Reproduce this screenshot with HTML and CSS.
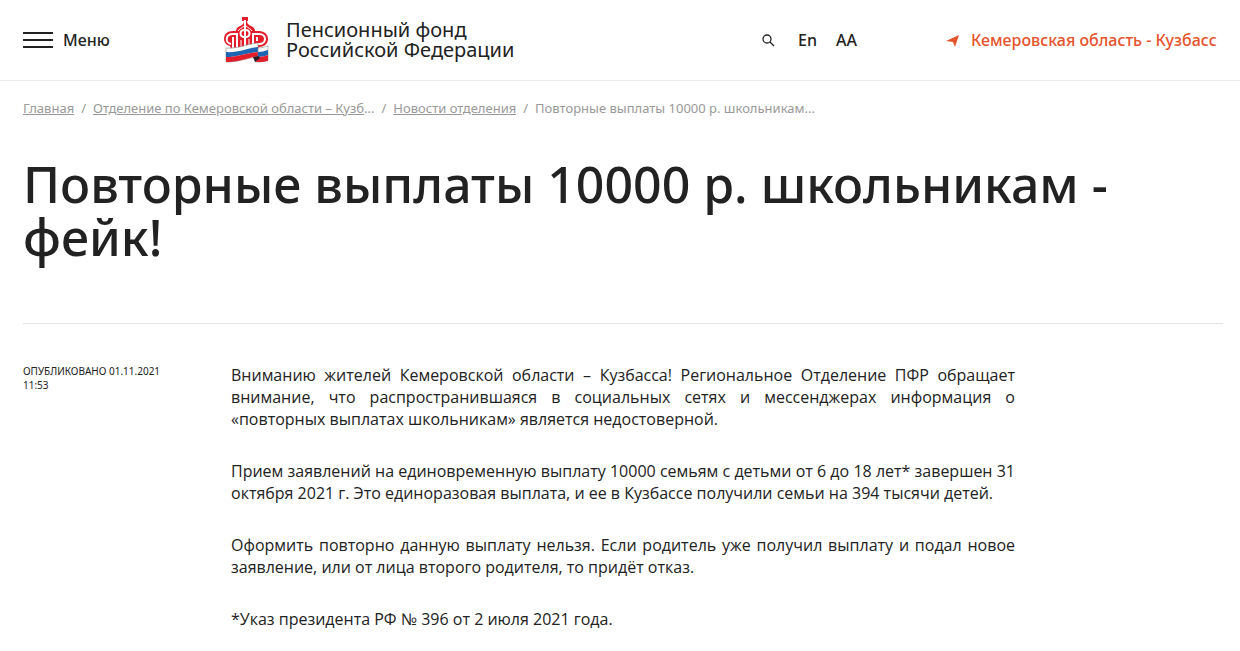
FILE: index.html
```html
<!DOCTYPE html>
<html lang="ru">
<head>
    <meta charset="UTF-8">
    <meta name="viewport" content="width=device-width, initial-scale=1.0">
    <title>Повторные выплаты 10000 р. школьникам - фейк!</title>
    <link rel="stylesheet" href="styles.css">
</head>
<body>
    <header class="header">
        <button type="button" class="menu-button">
            <span class="menu-icon"></span>
            Меню
        </button>

        <a href="#" class="logo">
            <svg class="logo-image" viewBox="0 0 46 48" aria-hidden="true">
                <!-- Crown -->
                <path fill="#e31e2b" d="M19 1h6v4h-1c0 3 2 4 4 5 3 1 4 3 4 5h4c6 0 9 4 9 8s-3 8-9 8l-1 2L8 33l-1-3c-4-1-6-4-6-7 0-5 3-8 9-8h3c0-2 1-4 4-5 2-1 4-2 4-5h-2z"/>
                <g fill="none" stroke="#fff" stroke-width="2">
                    <path d="M22 4v26"/>
                    <path d="M8 28c-6-1-6-10 2-10h5M10 32V21M14 32V18"/>
                    <path d="M30 30V18h6c8 0 8 10 0 10h-3M34 25v-4"/>
                    <path d="M22 14c-6-1-6 8 0 7 6 1 6-8 0-7z"/>
                    <path stroke-width="1" d="M18 32v-8M26 31v-8M15 15c1-2 4-3 6-5M29 15c-1-2-4-3-6-5"/>
                </g>
                <!-- Flag ribbon -->
                <path fill="#fff" stroke="#8a8a8a" stroke-width=".6" d="M3 32c12 1 21-4 32-5v14c-11 1-19 5-32 5z"/>
                <path fill="#1e65b4" d="M3 36c12 1 22-4 32-5v5c-11 1-20 5-32 5z"/>
                <path fill="#e31e2b" d="M3 41c12 0 21-4 32-5v4c-11 2-19 6-32 6z"/>
                <path fill="#fff" stroke="#8a8a8a" stroke-width=".6" d="M35 32c4 0 6-1 10-2v14c-5 2-9 2-13 2l3-4z"/>
                <path fill="#1e65b4" d="M35 36c4 0 6-1 10-2v5c-3 1-6 2-10 2z"/>
                <path fill="#e31e2b" d="M35 41c4 0 7-1 10-2v6c-4 1-8 1-12 1z"/>
                <path fill="#291b22" d="M30 41l5-1 2 2-5 4z"/>
            </svg>
            <span>Пенсионный фонд<br>Российской Федерации</span>
        </a>

        <div class="tools">
            <button type="button" class="search-button" aria-label="Поиск">
                <svg class="search-icon" viewBox="0 0 14 14" aria-hidden="true">
                    <circle cx="6" cy="6" r="4"/>
                    <path d="M9 9l4 4"/>
                </svg>
            </button>
            <a href="#">En</a>
            <a href="#">АА</a>
        </div>

        <a href="#" class="region">
            <svg class="region-icon" viewBox="0 0 14 14" aria-hidden="true">
                <path d="M13 2L9 14 7 9 0 8z"/>
            </svg>
            Кемеровская область - Кузбасс
        </a>
    </header>

    <main class="container">
        <nav class="breadcrumbs">
            <a href="#">Главная</a>
            <span>/</span>
            <span><a href="#">Отделение по Кемеровской области – Кузб</a>...</span>
            <span>/</span>
            <a href="#">Новости отделения</a>
            <span>/</span>
            <span>Повторные выплаты 10000 р. школьникам...</span>
        </nav>

        <h1>Повторные выплаты 10000 р. школьникам - фейк!</h1>

        <article class="news">
            <div class="news-date">Опубликовано 01.11.2021 11:53</div>
            <div class="news-text">
                <p>Вниманию жителей Кемеровской области – Кузбасса! Региональное Отделение ПФР обращает внимание, что распространившаяся в социальных сетях и мессенджерах информация о «повторных выплатах школьникам» является недостоверной.</p>
                <p>Прием заявлений на единовременную выплату 10000 семьям с детьми от 6 до 18 лет* завершен 31 октября 2021 г. Это единоразовая выплата, и ее в Кузбассе получили семьи на 394 тысячи детей.</p>
                <p>Оформить повторно данную выплату нельзя. Если родитель уже получил выплату и подал новое заявление, или от лица второго родителя, то придёт отказ.</p>
                <p>*Указ президента РФ № 396 от 2 июля 2021 года.</p>
            </div>
        </article>
    </main>
</body>
</html>
```
FILE: styles.css
```css
* {
    box-sizing: border-box;
}
body {
    margin: 0;
    background: #fff;
    color: #222;
    font-family: "Noto Sans", "Open Sans", sans-serif;
    font-size: 16px;
    line-height: 22px;
}
a {
    color: inherit;
    text-decoration: none;
}
button {
    padding: 0;
    border: none;
    background: none;
    color: inherit;
    font: inherit;
    cursor: pointer;
}
.header {
    display: grid;
    grid-template-columns: 200px 1fr 185px 276px;
    align-items: center;
    height: 81px;
    padding: 0 18px 0 23px;
    border-bottom: 1px solid #ebebeb;
    font-weight: 500;
}
.menu-button {
    display: flex;
    align-items: center;
    gap: 10px;
}
.menu-icon {
    width: 30px;
    height: 16px;
    border-top: 2px solid #222;
    border-bottom: 2px solid #222;
    background: linear-gradient(#222, #222) center / 100% 2px no-repeat;
}
.logo {
    display: flex;
    align-items: center;
    gap: 17px;
    font-size: 20px;
    font-weight: 400;
    line-height: 20px;
}
.logo-image {
    width: 46px;
    height: 48px;
}
.tools {
    display: flex;
    align-items: center;
    gap: 19px;
}
.search-button {
    display: flex;
    padding-right: 4px;
}
.search-icon {
    width: 14px;
    height: 14px;
    fill: none;
    stroke: #222;
    stroke-width: 1.3;
}
.region {
    display: flex;
    align-items: center;
    gap: 11px;
    color: #e5532d;
}
.region-icon {
    width: 14px;
    height: 14px;
    fill: #e5532d;
}
.container {
    max-width: 1246px;
    padding: 0 17px 0 23px;
}
.breadcrumbs {
    display: flex;
    gap: 7px;
    padding-top: 18px;
    color: #999;
    font-size: 13px;
    line-height: 18px;
}
.breadcrumbs a {
    text-decoration: underline;
}
h1 {
    margin: 0;
    padding: 41px 0 59px;
    border-bottom: 1px solid #e2e2e2;
    font-size: 50px;
    font-weight: 500;
    line-height: 53px;
}
.news {
    display: grid;
    grid-template-columns: 160px minmax(0, 784px);
    gap: 48px;
    padding-top: 40px;
}
.news-date {
    font-size: 10px;
    line-height: 14px;
    text-transform: uppercase;
}
.news-text {
    font-family: "Open Sans", sans-serif;
    text-align: justify;
}
.news-text p {
    margin: 0 0 30px;
}
```
